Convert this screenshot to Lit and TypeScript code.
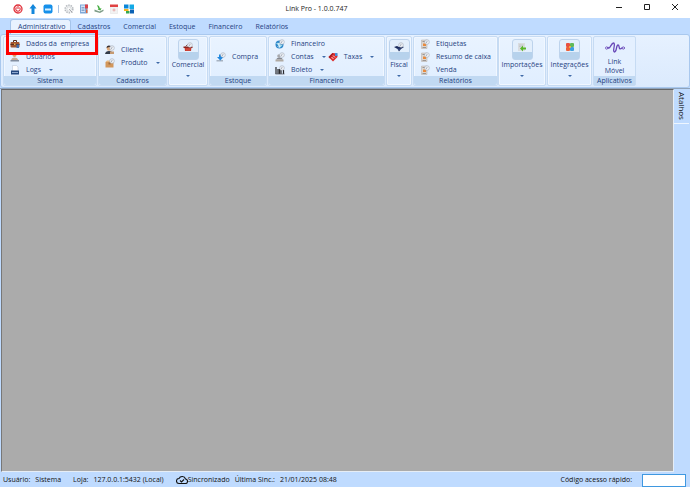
import { LitElement, html, css, svg, nothing } from "lit";
import { customElement, property, state } from "lit/decorators.js";
import { classMap } from "lit/directives/class-map.js";

const clockBadge = svg`<circle cx="14" cy="6" r="4.6" fill="#f3f6fa" stroke="#a7afbb" stroke-width="1.3"/><path d="M14 3.600V6.300L12 7.500" fill="none" stroke="#7d8796" stroke-width="1.2"/>`;
const report = svg`<path d="M3 2H14V19H3Z" fill="#dcd6d0" stroke="#b3aba5" stroke-width="1"/><path d="M6 9H12V14H6Z" fill="#e98a3c"/><path d="M5 5H10M5 17H12" stroke="#7e7a78" stroke-width="1.4"/>${clockBadge}`;

const icons: Record<string, unknown> = {
  power: svg`<circle cx="10" cy="10" r="8" fill="#fff" stroke="#e0323c" stroke-width="2.6"/><path d="M7 7A4.4 4.4 0 1 0 13 7M10 4V10" fill="none" stroke="#e0323c" stroke-width="2.2"/>`,
  up: svg`<path d="M10 0L17 9H13V20H7V9H3Z" fill="#1387dc"/>`,
  card: svg`<rect x="1" y="1" width="18" height="18" rx="4" fill="#1690ea"/><path d="M4 9H16V13H4Z" fill="#d9f0ff"/>`,
  gear: svg`<circle cx="10" cy="10" r="7.5" fill="none" stroke="#b6babf" stroke-width="3.4" stroke-dasharray="3 1.7"/><circle cx="10" cy="10" r="4.5" fill="#fafafa" stroke="#c7cbd0" stroke-width="1.4"/><path d="M10 10L17 17" stroke="#9d9fa4" stroke-width="1.6"/>`,
  ledger: svg`<path d="M2 1H17V19H2Z" fill="#7fa8d8"/><path d="M4 3H12V16H4Z" fill="#d3e3f6"/><path d="M12 1H18V9H12Z" fill="#d8434a"/><path d="M5 7H11M5 10H11M5 13H11" stroke="#5b83b5" stroke-width="1.3"/><path d="M14 11H17V18H14Z" fill="#e0683c"/>`,
  hand: svg`<path d="M6 2L10 4L12 9L15 8L13 13L7 11L9 10Z" fill="#45ad42"/><path d="M1 11L6 13L11 15L19 11V14L12 18L1 15Z" fill="#7f9d88"/>`,
  calendar: svg`<path d="M3 3H17V19H3Z" fill="#f2f2f2" stroke="#dedede"/><path d="M2 1H18V6H2Z" fill="#e04343"/><path d="M7 12H13M10 9V15" stroke="#e5a0a0" stroke-width="1.8"/>`,
  blocks: svg`<path d="M0 1H9V9H0Z" fill="#0a86d8"/><path d="M11 1H20V10H11Z" fill="#12a9e6"/><path d="M0 10H9V14H0Z" fill="#f4b51f"/><path d="M4 14H11V19H4Z" fill="#36a852"/><path d="M12 11H20V19H12Z" fill="#0b62b5"/>`,
  briefcase: svg`<path d="M7 6V3H13V6" fill="none" stroke="#5a2d1c" stroke-width="2"/><rect x="1" y="6" width="18" height="11" rx="2" fill="#a0522f"/><path d="M1 10H19V12H1Z" fill="#5f2d1a"/><path d="M8 9H11V12H8Z" fill="#e4b04d"/><path d="M13 11H18V18H13Z" fill="#3e6cae"/>`,
  users: svg`<circle cx="9" cy="6" r="4" fill="#d9a36d"/><path d="M2 17Q3 11 9 11T17 17Z" fill="#c8a893"/><path d="M1 16H18V19H1Z" fill="#838e9f"/>`,
  logs: svg`<path d="M5 1H13L16 4V12H5Z" fill="#fff" stroke="#b5c0d0"/><path d="M2 11H18V19H2Z" fill="#24477e"/><path d="M4 15H16" stroke="#8fa9cf" stroke-width="2"/>`,
  client: svg`<circle cx="8" cy="7" r="4.6" fill="#e1aa78"/><path d="M3 6Q3 1 8 1T13 5L8 4Z" fill="#382c2a"/><path d="M0 18Q1 12 8 12T16 18Z" fill="#333b49"/><path d="M10 13H18V18H10Z" fill="#c69a72"/>${clockBadge}`,
  product: svg`<path d="M1 8H17V19H1Z" fill="#d2975c"/><path d="M1 8L4 5H14L17 8Z" fill="#e8b77e"/><path d="M7 9H11V13H7Z" fill="#9f6b3c"/>${clockBadge}`,
  basket: svg`<path d="M3 10H17L16 18H4Z" fill="#c73a2d"/><path d="M1 9H19V12H1Z" fill="#8d241d"/><path d="M8 13V17M12 13V17" stroke="#e37a68" stroke-width="1"/><path d="M5 9L9 5" stroke="#703028" stroke-width="1.6"/>${clockBadge}`,
  purchase: svg`<path d="M1 16H14V19H1Z" fill="#a7b2c1"/><path d="M6 5H11V10H15L8.500 17L2 10H6Z" fill="#2187dd"/>${clockBadge}`,
  globe: svg`<circle cx="9" cy="11" r="8" fill="#2c86c9"/><path d="M2 9Q6 6 9 9T15 12Q12 17 8 18Q9 13 2 9Z" fill="#a5dced"/><path d="M11 9Q6 7 7 11T10 15Q8 17 5 15" fill="none" stroke="#f5fbff" stroke-width="1.4"/>${clockBadge}`,
  accounts: svg`<circle cx="8" cy="8" r="3.600" fill="#a8a9ad"/><path d="M2 15Q4 11 9 11T16 15Z" fill="#85878d"/><path d="M1 15H17V19H1Z" fill="#b0aaa3"/>${clockBadge}`,
  barcode: svg`<path d="M2 4V18M6 8V18M9 8V18M12 9V18M17 10V18" stroke="#28282c" stroke-width="2.4"/><path d="M1 18H19" stroke="#55585e" stroke-width="1.4"/>${clockBadge}`,
  tag: svg`<path d="M1 10L9 2L18 3L19 10L10 19Z" fill="#dc2b2b"/><path d="M1 10L9 2L11 4L4 13Z" fill="#a81d22"/><path d="M7 10L11 14M10 7L14 11" stroke="#fff" stroke-width="1.6"/><path d="M14 2H19V8H14Z" fill="#4a90d6"/>`,
  fiscal: svg`<path d="M0 10L6 8L10 10L14 8L20 10L14 14L10 19L7 14Z" fill="#1b2b5c"/><path d="M8 13L10 15L12 13" fill="none" stroke="#7f9bd0" stroke-width="1.2"/>${clockBadge}`,
  report,
  importing: svg`<path d="M2 2H16V18H2Z" fill="#d9dcdf"/><path d="M4 6H13M4 9H9" stroke="#b5babf" stroke-width="1.2"/><path d="M6 13L12 7V11H18V15H12V19Z" fill="#58b82c"/>`,
  puzzle: svg`<rect x="2" y="2" width="8" height="8" rx="2" fill="#e8503f"/><rect x="10" y="2" width="8" height="8" rx="2" fill="#62b957"/><rect x="2" y="10" width="8" height="8" rx="2" fill="#ee5f38"/><rect x="10" y="10" width="8" height="8" rx="2" fill="#3f9fe0"/><circle cx="10" cy="10" r="2" fill="#f5b63b"/>`,
};

const icon = (name: string) =>
  html`<svg class="icon" viewBox="0 0 20 20" aria-hidden="true">${icons[name]}</svg>`;

interface Item { icon: string; label: string; menu?: boolean }
interface Group { title?: string; size: string; columns?: Item[][]; big?: Item }

const groups: Group[] = [
  { title: "Sistema", size: "sistema", columns: [[
    { icon: "briefcase", label: "Dados da \u00a0empresa" },
    { icon: "users", label: "Usuários" },
    { icon: "logs", label: "Logs", menu: true }]] },
  { title: "Cadastros", size: "cadastros", columns: [[
    { icon: "client", label: "Cliente" },
    { icon: "product", label: "Produto", menu: true }]] },
  { size: "comercial", big: { icon: "basket", label: "Comercial" } },
  { title: "Estoque", size: "estoque", columns: [[{ icon: "purchase", label: "Compra" }]] },
  { title: "Financeiro", size: "financeiro", columns: [
    [{ icon: "globe", label: "Financeiro" },
     { icon: "accounts", label: "Contas", menu: true },
     { icon: "barcode", label: "Boleto", menu: true }],
    [{ icon: "tag", label: "Taxas", menu: true }]] },
  { size: "fiscal", big: { icon: "fiscal", label: "Fiscal" } },
  { title: "Relatórios", size: "relatorios", columns: [[
    { icon: "report", label: "Etiquetas" },
    { icon: "report", label: "Resumo de caixa" },
    { icon: "report", label: "Venda" }]] },
  { size: "importacoes", big: { icon: "importing", label: "Importações" } },
  { size: "integracoes", big: { icon: "puzzle", label: "Integrações" } },
];

const base = css`
  * { box-sizing: border-box; }
  button {
    font: inherit; color: inherit; background: none; border: 0;
    margin: 0; padding: 0; white-space: nowrap;
  }
  .icon { width: 10px; height: 10px; flex: none; display: block; }
`;

@customElement("ribbon-group")
class RibbonGroup extends LitElement {
  @property({ attribute: false }) group!: Group;

  static styles = [base, css`
    :host { display: flex; }
    .group {
      flex: 1; display: flex; flex-direction: column;
      border: 1px solid #c6dbf3; border-radius: 2px;
      background: linear-gradient(#e9f3ff, #e0eeff);
      box-shadow: inset 0 0 0 1px #f1f7ff;
    }
    .columns { flex: 1; display: flex; padding: 0 6px; gap: 2px; }
    .column { display: flex; flex-direction: column; justify-content: center; }
    .item { display: flex; align-items: center; gap: 6px; height: 13px; }
    .arrow {
      width: 0; height: 0; margin-left: 2px;
      border: 2px solid transparent; border-top-color: #3f6aa8; border-bottom: 0;
    }
    .title {
      height: 9px; line-height: 9px; text-align: center;
      background: #c1d9f2; border-radius: 0 0 2px 2px;
    }
    .big { flex: 1; display: flex; flex-direction: column; align-items: center; padding-top: 2px; }
    .big .arrow { margin: 5px 0 0; }
    .face {
      width: 21px; height: 21px; padding-top: 2px;
      display: flex; justify-content: center;
      border: 1px solid #bdd3ec; border-radius: 3px;
      background: linear-gradient(#e3effc 65%, #b7d2ec 65%);
    }
    .label { line-height: 10px; }
  `];

  render() {
    const { columns, big, title } = this.group;
    return html`<section class="group">
      ${big ? html`<button class="big">
        <span class="face">${icon(big.icon)}</span>
        <span class="label">${big.label}</span><span class="arrow"></span>
      </button>` : nothing}
      ${columns ? html`<div class="columns">${columns.map((column) => html`<div class="column">
        ${column.map((item) => html`<button class="item">
          ${icon(item.icon)}<span>${item.label}</span>
          ${item.menu ? html`<span class="arrow"></span>` : nothing}
        </button>`)}
      </div>`)}</div>` : nothing}
      ${title ? html`<div class="title">${title}</div>` : nothing}
    </section>`;
  }
}

@customElement("app-root")
class AppRoot extends LitElement {
  @state() private active = "Administrativo";

  static styles = [base, css`
    :host {
      display: flex; flex-direction: column; min-height: 100vh;
      font: 7px/10px "Open Sans", "Noto Sans", sans-serif;
      color: #1f3f7f; background: #bfdbff;
    }
    .titlebar {
      height: 18px; display: grid; grid-template-columns: 5fr auto 6fr;
      align-items: center; background: #fff; color: #222;
    }
    .caption { font: inherit; margin: 0; }
    .quick { display: flex; align-items: center; gap: 5px; padding-left: 13px; }
    .divider { width: 1px; height: 8px; background: #a9c4e4; }
    .window { display: flex; justify-content: flex-end; gap: 20px; padding: 0 11px 4px 0; }
    .window svg { width: 8px; height: 8px; display: block; }
    .tabs { height: 16px; display: flex; align-items: stretch; gap: 1px; padding: 1px 0 0 10px; }
    .tab { padding: 0 6px; }
    .tab.active {
      background: #e8f2ff; border: 1px solid #a5c4ea; border-bottom: 0;
      border-radius: 3px 3px 0 0; padding: 0 4px 0 7px;
    }
    .top { position: relative; }
    .ribbon {
      display: flex; gap: 1px; height: 54px; padding: 1px 2px;
      background: linear-gradient(#e6f1ff, #dbeafd);
      border: 1px solid #a9c8ee; border-radius: 3px;
    }
    .highlight {
      position: absolute; left: 6px; top: 12px; width: 92px; height: 25px;
      border: 3px solid #fe0000; pointer-events: none;
    }
    .sistema { width: 94px; }
    .cadastros { width: 69px; }
    .comercial { width: 40px; }
    .estoque { width: 58px; }
    .financeiro { width: 117px; }
    .fiscal { width: 26px; }
    .relatorios { width: 84px; }
    .importacoes { width: 48px; }
    .integracoes { width: 45px; }
    .app {
      width: 43px; display: flex; flex-direction: column;
      border: 1px solid #c6dbf3; border-radius: 2px; background: #e4f0ff;
    }
    .app button { flex: 1; line-height: 9px; }
    .app svg { width: 20px; height: 14px; display: block; margin: 2px auto 3px; }
    .app-title { height: 9px; line-height: 9px; text-align: center; background: #c1d9f2; }
    .body { flex: 1; display: flex; border-top: 1px solid #8fa3bb; }
    .workspace {
      flex: 1; background: #ababab; margin-left: 1px;
      border-top: 1px solid #666; border-left: 1px solid #777; border-right: 1px solid #e6edf5;
      border-bottom: 1px solid #e6edf5;
    }
    .side { width: 16px; }
    .shortcut {
      writing-mode: vertical-rl; width: 15px; height: 35px; font-size: 8px; color: #111;
      border-bottom: 1px solid #eef6ff; text-align: center;
    }
    .status {
      height: 15px; display: flex; align-items: center; padding: 1px 4px 0 3px;
      color: #111; white-space: pre;
    }
    .pair { display: flex; gap: 5px; margin-right: 12px; }
    .sync { display: flex; align-items: center; margin-right: 5px; }
    .sync svg { width: 12px; height: 10px; display: block; }
    .code { margin-left: auto; display: flex; align-items: center; gap: 10px; }
    .code input {
      width: 44px; height: 13px; border: 1px solid #3f98e0; background: #fff;
      font: inherit; padding: 0 2px; margin: 0; border-radius: 0;
    }
  `];

  render() {
    const tabs = ["Administrativo", "Cadastros", "Comercial", "Estoque", "Financeiro", "Relatórios"];
    return html`
      <header class="titlebar">
        <div class="quick">
          ${["power", "up", "card"].map((n) => html`<button aria-label=${n}>${icon(n)}</button>`)}
          <span class="divider"></span>
          ${["gear", "ledger", "hand", "calendar", "blocks"].map((n) => html`<button aria-label=${n}>${icon(n)}</button>`)}
        </div>
        <h1 class="caption">Link Pro - 1.0.0.747</h1>
        <div class="window">
          <button aria-label="Minimizar"><svg viewBox="0 0 8 8"><path d="M1 4.500H7" stroke="#222" /></svg></button>
          <button aria-label="Maximizar"><svg viewBox="0 0 8 8"><path d="M1.500 1.500H6.500V6.500H1.500Z" fill="none" stroke="#222" /></svg></button>
          <button aria-label="Fechar"><svg viewBox="0 0 8 8"><path d="M1 1L7 7M7 1L1 7" stroke="#222" /></svg></button>
        </div>
      </header>
      <div class="top">
        <nav class="tabs">
          ${tabs.map((t) => html`<button class=${classMap({ tab: true, active: t === this.active })}
            @click=${() => (this.active = t)}>${t}</button>`)}
        </nav>
        <div class="ribbon">
          ${groups.map((g) => html`<ribbon-group class=${g.size} .group=${g}></ribbon-group>`)}
          <section class="app">
            <button>
              <svg viewBox="0 0 20 14" fill="none" stroke="#6848b8" stroke-width="1.3" stroke-linecap="round">
                <circle cx="1.700" cy="8" r="1.200" stroke-width="0.8" /><circle cx="18.300" cy="8" r="1.200" stroke-width="0.8" />
                <path d="M3 7.500C5 10 6 3 8.500 3C11 3 7 12 9.500 12C12 12 11 5 13 5C15 5 13 11 17 8" />
              </svg>
              Link<br />Móvel
            </button>
            <div class="app-title">Aplicativos</div>
          </section>
        </div>
        <div class="highlight"></div>
      </div>
      <div class="body">
        <main class="workspace"></main>
        <aside class="side"><button class="shortcut">Atalhos</button></aside>
      </div>
      <footer class="status">
        <div class="pair"><span>Usuário:</span><span>Sistema</span></div>
        <div class="pair"><span>Loja:</span><span>127.0.0.1:5432 (Local)</span></div>
        <div class="sync">
          <svg viewBox="0 0 24 20" fill="none" stroke="#111" stroke-width="2.2"><path d="M6 17H18A4.500 4.500 0 0 0 19 8A7 7 0 0 0 6 7A5 5 0 0 0 6 17Z" /><path d="M8 11L11 14L16 9" /></svg>
          <span>Sincronizado</span>
        </div>
        <div class="pair"><span>Última Sinc.:</span><span>21/01/2025 08:48</span></div>
        <div class="code"><label for="code">Código acesso rápido:</label><input id="code" type="text" /></div>
      </footer>`;
  }
}
